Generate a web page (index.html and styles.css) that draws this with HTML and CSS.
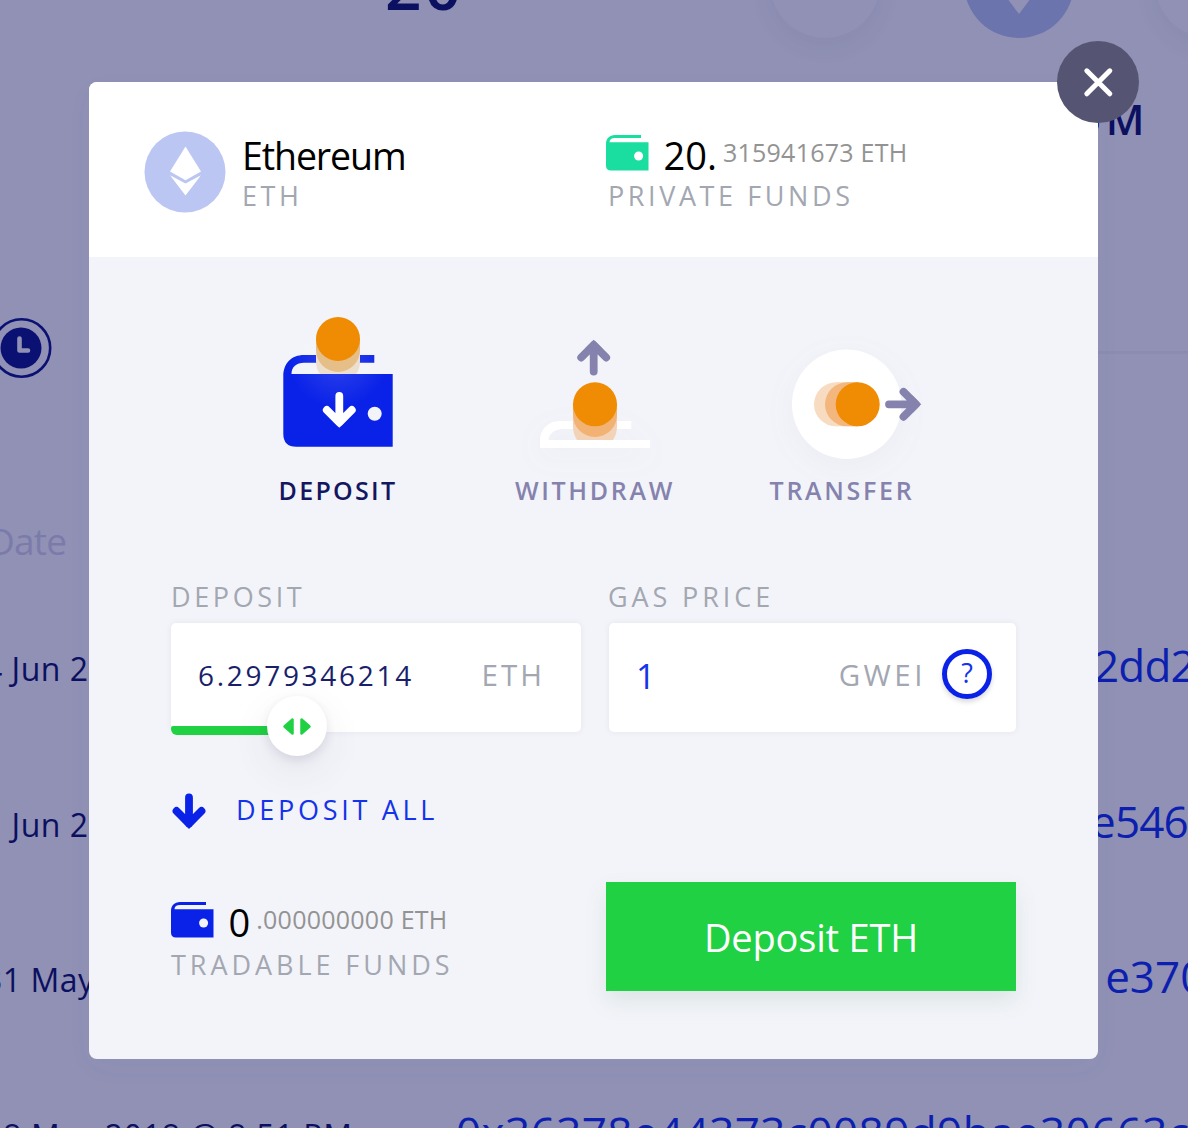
FILE: index.html
```html
<!DOCTYPE html>
<html lang="en">
<head>
<meta charset="utf-8">
<title>Deposit Ethereum</title>
<link rel="stylesheet" href="styles.css">
</head>
<body>
<main class="page">
  <header class="summary">
    <div class="total">20</div>
    <div class="coin coin-plain"></div>
    <div class="coin coin-active">
      <svg class="coin-mark" viewBox="0 0 40 30"><path d="M5 0 20 20 35 0Z" fill="#9091b5"/></svg>
    </div>
    <div class="coin coin-plain"></div>
    <div class="coin-label">ETHEREUM</div>
  </header>
  <div class="history-title">
    <svg class="clock" width="60" height="60" viewBox="0 0 60 60">
      <circle cx="29.500" cy="30" r="28.700" fill="none" stroke="#0a1172" stroke-width="2.600"/>
      <circle cx="29" cy="30" r="20.500" fill="#0a1172"/>
      <path d="M27.500 20.500V32.500H36" fill="none" stroke="#9091b5" stroke-width="4.600" stroke-linecap="round" stroke-linejoin="round"/>
    </svg>
    <span class="rule"></span>
  </div>
  <div class="column-head">Date</div>
  <div class="entry"><span class="date">4 Jun 2</span><span class="hash hash-a">2dd2</span></div>
  <div class="entry"><span class="date">1 Jun 2</span><span class="hash hash-b">e546</span></div>
  <div class="entry"><span class="date">31 May</span><span class="hash hash-c">1e370</span></div>
  <div class="entry"><span class="date date-full">28 May 2018 @ 8:51 PM</span><span class="hash hash-full">0x36378e44373c0089d9bae30663c</span></div>
</main>

<div class="overlay">
  <section class="modal">
    <button class="close" aria-label="Close">
      <svg width="82" height="82" viewBox="0 0 82 82"><path d="M29.800 29.800 52.800 52.800M52.800 29.800 29.800 52.800" stroke="#fff" stroke-width="5" stroke-linecap="round"/></svg>
    </button>
    <header class="modal-head">
      <div class="asset">
        <svg width="82" height="82" viewBox="0 0 82 82">
          <circle cx="41" cy="41" r="40.500" fill="#bbc6f2"/>
          <path d="M41.500 15.500 57 40.500 41.500 49.200 26 40.500Z" fill="#fff"/>
          <path d="M26 44.200 41.500 52.500 57 44.200 41.500 64.500Z" fill="#fff"/>
        </svg>
        <div class="asset-text">
          <div class="asset-name">Ethereum</div>
          <div class="asset-code">ETH</div>
        </div>
      </div>
      <div class="funds">
        <div class="amount">
          <svg class="wallet" width="43" height="36" viewBox="0 0 43 36"><path d="M0 9C0 3.500 3.500 0 9 0H35V3H9C5.500 3 3.500 4.500 3.500 7.300H42.500V35.500H5Q0 35.500 0 30.500Z" fill="#19dea0"/><circle cx="32.600" cy="21" r="4.500" fill="#fff"/></svg>
          <span class="whole">20.</span><span class="fraction">315941673 ETH</span>
        </div>
        <div class="funds-label">PRIVATE FUNDS</div>
      </div>
    </header>

    <nav class="actions">
      <div class="action action-on">
        <svg width="160" height="150" viewBox="257 310 160 150">
          <defs><radialGradient id="glow" gradientUnits="userSpaceOnUse" cx="338" cy="358" r="50"><stop offset="0" stop-color="#fff" stop-opacity=".15"/><stop offset=".4" stop-color="#fff" stop-opacity=".09"/><stop offset="1" stop-color="#fff" stop-opacity="0"/></radialGradient></defs>
          <path d="M283.300 376C283.300 363.500 291.500 355 304 355H374.300V362.800H304C296.500 362.800 291.500 367 291.500 374H392.700V446.700H296.300Q283.300 446.700 283.300 433.700Z" fill="#0a22e8"/>
          <circle cx="338" cy="358" r="50" fill="url(#glow)"/>
          <path d="M316 339V361Q316 369 320 374H356Q360 369 360 361V339Z" fill="#eddfce"/>
          <path d="M316 339V350A22 22 0 0 0 360 350V339Z" fill="#e6be88"/>
          <circle cx="338" cy="339" r="22" fill="#f08b04"/>
          <path d="M339.300 396V422M326.800 410 339.300 422.500 351.800 410" fill="none" stroke="#fff" stroke-width="7.800" stroke-linecap="round" stroke-linejoin="round"/>
          <path d="M339.300 416 331 419 339.300 427.700 347.600 419Z" fill="#fff"/>
          <circle cx="374.700" cy="413.700" r="7" fill="#f3f4f9"/>
        </svg>
        <span class="action-label">DEPOSIT</span>
      </div>
      <div class="action action-withdraw">
        <svg width="160" height="150" viewBox="514 310 160 150">
          <path class="soft" d="M540 448V441C540 429.500 548.500 421 560 421H631.300V429H563C554 429 549 434 548.500 440H650V448Z" fill="#fff"/>
          <path d="M573 404V426Q573 434 577 440H613Q617 434 617 426V404Z" fill="#f3d3b8"/>
          <path d="M573 404V415A22 22 0 0 0 617 415V404Z" fill="#f1b274"/>
          <circle cx="595" cy="404.300" r="22" fill="#f08b04"/>
          <path d="M593.700 371.500V346M581.200 357.500 593.700 345 606.200 357.500" fill="none" stroke="#8583ad" stroke-width="7.800" stroke-linecap="round" stroke-linejoin="round"/>
          <path d="M593.700 352 585 348.500 593.700 339.800 602.400 348.500Z" fill="#8583ad"/>
        </svg>
        <span class="action-label">WITHDRAW</span>
      </div>
      <div class="action action-transfer">
        <svg width="160" height="150" viewBox="761 310 160 150">
          <circle class="soft" cx="846.700" cy="404.300" r="54.700" fill="#fff"/>
          <circle cx="836" cy="404.300" r="22" fill="#f7dcc2"/>
          <path d="M836 382.300H858V426.300H836Z" fill="#f7dcc2"/>
          <path d="M858 382.300H847A22 22 0 0 0 847 426.300H858Z" fill="#f3b77d"/>
          <circle cx="857.700" cy="404.300" r="22" fill="#f08b04"/>
          <path d="M889 404.300H914M903.500 391.800 916 404.300 903.500 416.800" fill="none" stroke="#8583ad" stroke-width="7.800" stroke-linecap="round" stroke-linejoin="round"/>
          <path d="M909 404.300 912.500 395.600 921.200 404.300 912.500 413Z" fill="#8583ad"/>
        </svg>
        <span class="action-label">TRANSFER</span>
      </div>
    </nav>

    <div class="fields">
      <div class="field">
        <div class="field-label">DEPOSIT</div>
        <div class="box">
          <span class="value">6.2979346214</span>
          <span class="unit">ETH</span>
          <div class="track"></div>
          <div class="knob"><svg width="60" height="60" viewBox="0 0 60 60"><path d="M17.500 29.500 25.500 22.500V36.500ZM42.500 29.500 34.500 22.500V36.500Z" fill="#1fd143" stroke="#1fd143" stroke-width="2.500" stroke-linejoin="round"/></svg></div>
        </div>
      </div>
      <div class="field">
        <div class="field-label gas-label">GAS PRICE</div>
        <div class="box box-gas">
          <span class="value value-gas">1</span>
          <span class="unit unit-gas">GWEI</span>
          <span class="help">?</span>
        </div>
      </div>
    </div>

    <div class="all">
      <svg width="36" height="40" viewBox="0 0 36 40"><path d="M18 6.500V32.500M5.500 20 18 32.500 30.500 20" fill="none" stroke="#0a22e8" stroke-width="7.800" stroke-linecap="round" stroke-linejoin="round"/><path d="M18 25.500 9.500 29 18 38 26.500 29Z" fill="#0a22e8"/></svg>
      <span class="all-text">DEPOSIT ALL</span>
    </div>

    <div class="bottom">
      <div class="funds funds-tradable">
        <div class="amount">
          <svg class="wallet" width="43" height="36" viewBox="0 0 43 36"><path d="M0 9C0 3.500 3.500 0 9 0H35V3H9C5.500 3 3.500 4.500 3.500 7.300H42.500V35.500H5Q0 35.500 0 30.500Z" fill="#0a22e8"/><circle cx="32.600" cy="21" r="4.500" fill="#f3f4f9"/></svg>
          <span class="whole">0</span><span class="fraction">.000000000 ETH</span>
        </div>
        <div class="funds-label">TRADABLE FUNDS</div>
      </div>
      <button class="submit">Deposit ETH</button>
    </div>
  </section>
</div>
</body>
</html>
```
FILE: styles.css
```css
* { box-sizing: border-box; }
body {
  margin: 0;
  width: 1188px;
  height: 1128px;
  overflow: hidden;
  background: #9091b5;
  font-family: "Open Sans", "Noto Sans", sans-serif;
  font-weight: 400;
}
svg { display: block; flex: none; }
.page { height: 1128px; overflow: hidden; white-space: nowrap; }

.summary { display: grid; grid-template-columns: 388px 382px 194px 191px 110px; grid-template-rows: 38px 280px; }
.total { grid-column: 2; margin-top: -49px; margin-left: -3px; font-size: 64px; line-height: 70px; font-weight: 600; letter-spacing: 3px; color: #0c1060; }
.coin { width: 110px; height: 110px; margin-top: -72px; border-radius: 50%; }
.coin-plain { box-shadow: 0 8px 22px rgba(70, 70, 120, .08); }
.coin-active { background: #6c74ad; overflow: hidden; }
.coin-mark { width: 40px; height: 30px; margin: 66px 0 0 35px; }
.coin-label { grid-column: 4; grid-row: 2; margin: 55px 0 0 -65px; font-size: 42px; line-height: 52px; font-weight: 600; letter-spacing: 3.3px; color: #0c1060; }

.history-title { display: flex; align-items: center; height: 60px; margin-left: -8px; }
.rule { flex: 1; height: 3px; margin: 9px 0 0 1040px; background: #8b8cb2; }
.column-head { margin: 138px 0 0 -12px; height: 50px; font-size: 37px; line-height: 50px; letter-spacing: -.8px; color: #7b7bab; }
.entry { display: flex; align-items: center; height: 155.600px; }
.column-head + .entry { margin-top: 25px; }
.date { flex: none; width: 1110px; margin-left: -16px; font-size: 32px; letter-spacing: .5px; color: #0c1060; }
.hash { margin-top: -7px; font-size: 44px; color: #0d1fae; }
.hash-a { letter-spacing: -.8px; }
.hash-b { margin-left: -3px; letter-spacing: -.8px; }
.hash-c { margin-left: -14px; }
.date-full { width: 472px; letter-spacing: .7px; }
.hash-full { letter-spacing: .42px; }

.overlay { position: absolute; inset: 0; padding: 82px 90px 69px 89px; }
.modal { position: relative; height: 977px; border-radius: 8px; background: #f3f4f9; box-shadow: 0 8px 30px rgba(80, 80, 130, .03); white-space: nowrap; }
.close { position: absolute; top: -41px; right: -41px; width: 82px; height: 82px; padding: 0; border: 0; border-radius: 50%; background: #555573; }
.modal-head { display: grid; grid-template-columns: 462px auto; height: 175px; padding: 49px 0 0 55px; border-radius: 8px 8px 0 0; background: #fff; }
.asset { display: flex; gap: 16px; }
.asset-name { margin-top: 1px; font-size: 37.500px; line-height: 48px; letter-spacing: -1.100px; color: #000; }
.asset-code, .funds-label, .field-label { font-size: 27px; line-height: 32px; color: #a3a7b1; }
.asset-code { letter-spacing: 3.6px; }
.amount { display: flex; height: 48px; line-height: 48px; }
.wallet { margin-top: 4px; margin-left: -.5px; }
.whole { margin-left: 15px; font-size: 38px; color: #000; }
.fraction { margin: -3px 0 0 6px; font-size: 25px; letter-spacing: .25px; color: #939393; }
.funds-label { padding-left: 2px; margin-top: 1px; letter-spacing: 3.6px; }

.actions { display: flex; padding: 53px 0 0 168px; }
.action { display: flex; flex-direction: column; align-items: center; width: 160px; color: #8583ad; }
.action svg { overflow: visible; }
.soft { filter: drop-shadow(0 8px 14px rgba(90, 110, 160, .05)); }
.action-withdraw { margin-left: 97px; }
.action-transfer { margin-left: 87px; }
.action-label { margin: 14px -10px 0 -8px; font-size: 25px; line-height: 32px; font-weight: 650; letter-spacing: 2.700px; }
.action-on { color: #141760; }
.action-on .action-label { letter-spacing: 2.3px; }

.fields { display: grid; grid-template-columns: 410px 407px; column-gap: 28px; padding: 75px 0 0 82px; }
.field-label { letter-spacing: 3.6px; }
.gas-label { margin-left: -1px; letter-spacing: 3.9px; }
.box { position: relative; display: flex; align-items: center; height: 109px; margin-top: 10px; padding: 0 36px 4px 27px; border-radius: 5px; background: #fff; box-shadow: 0 0 6px rgba(60, 70, 120, .08); }
.value { margin-top: -2px; font-size: 28px; letter-spacing: 2.7px; color: #1a1f6b; }
.unit { margin: -2px 0 0 auto; font-size: 29.500px; letter-spacing: 3px; color: #a3a7b1; }
.unit-gas { letter-spacing: 3.5px; }
.track { position: absolute; left: 0; bottom: -3px; width: 126px; height: 9px; border-radius: 2px 0 0 6px; background: #1fd143; }
.knob { position: absolute; left: 96px; bottom: -24px; width: 60px; height: 60px; border-radius: 50%; background: #fff; box-shadow: 0 4px 10px rgba(60, 60, 90, .12), 0 14px 40px rgba(60, 60, 90, .08); }
.knob svg { margin-top: 1px; }
.box-gas { padding-right: 24px; }
.value-gas { margin-top: 0; font-size: 34px; letter-spacing: 0; color: #1433ea; }
.help { width: 50px; height: 50px; margin: -3px 0 0 16px; border: 5px solid #0a22e8; border-radius: 50%; font-size: 27px; line-height: 38px; text-align: center; color: #1433ea; box-shadow: 0 3px 5px rgba(0, 0, 0, .15); }

.all { display: flex; align-items: center; gap: 29px; height: 40px; margin: 59px 0 0 82px; }
.all-text { margin-top: -2px; font-size: 27px; line-height: 36px; letter-spacing: 3.7px; color: #1433ea; }
.bottom { display: grid; grid-template-columns: 436px 410px; padding: 51px 0 0 81px; }
.submit { height: 109px; padding: 0; border: 0; background: #1fd143; color: #fff; font: 400 38px/106px "Open Sans", "Noto Sans", sans-serif; letter-spacing: -.2px; box-shadow: 0 10px 22px rgba(30, 110, 60, .1); }
.funds-tradable { padding: 16px 0 0; }
.funds-tradable .wallet { margin-left: .5px; }
.funds-tradable .funds-label { padding-left: 1px; margin-top: 3px; letter-spacing: 3.95px; }
```
